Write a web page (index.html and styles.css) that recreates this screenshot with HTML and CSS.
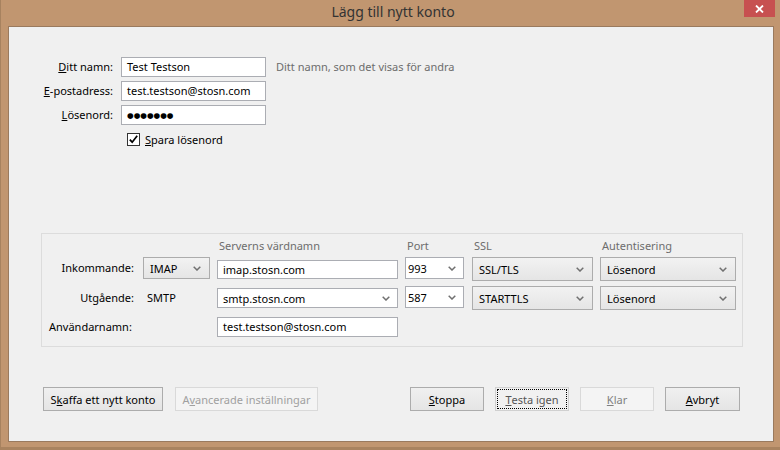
FILE: index.html
```html
<!DOCTYPE html>
<html lang="sv">
<head>
<meta charset="utf-8">
<title>Lägg till nytt konto</title>
<link rel="stylesheet" href="styles.css">
</head>
<body>
<div class="window">
  <div class="titlebar">
    <span></span>
    <div class="title">Lägg till nytt konto</div>
    <div class="close-wrap">
      <div class="close"><svg width="9" height="8" viewBox="0 0 9 8"><path d="M1 0.5 L8 7.5 M8 0.5 L1 7.5" stroke="#fff" stroke-width="1.8" fill="none"/></svg></div>
    </div>
  </div>
  <div class="content">
    <div class="form">
      <div class="lbl"><u>D</u>itt namn:</div>
      <div class="input">Test Testson</div>
      <div class="hint">Ditt namn, som det visas för andra</div>

      <div class="lbl"><u>E</u>-postadress:</div>
      <div class="input">test.testson@stosn.com</div>
      <div></div>

      <div class="lbl"><u>L</u>ösenord:</div>
      <div class="input"><span class="dots">●●●●●●●</span></div>
      <div></div>

      <div></div>
      <div class="check-row">
        <span class="checkbox"><svg width="11" height="11" viewBox="0 0 11 11"><path d="M1.8 5.6 L4.2 8.2 L9.2 1.8" stroke="#000" stroke-width="1.7" fill="none"/></svg></span>
        <span><u>S</u>para lösenord</span>
      </div>
    </div>

    <div class="group">
      <div class="sgrid">
        <div></div>
        <div></div>
        <div class="head">Serverns värdnamn</div>
        <div class="head">Port</div>
        <div class="head">SSL</div>
        <div class="head">Autentisering</div>

        <div class="rlbl">Inkommande:</div>
        <div class="select h22">IMAP<svg class="chev" width="8" height="5" viewBox="0 0 8 5"><path d="M0.7 0.7 L4 4 L7.3 0.7" stroke="#707070" stroke-width="1.5" fill="none"/></svg></div>
        <div class="input host1">imap.stosn.com</div>
        <div class="combo port">993<svg class="chev" width="8" height="5" viewBox="0 0 8 5"><path d="M0.7 0.7 L4 4 L7.3 0.7" stroke="#707070" stroke-width="1.5" fill="none"/></svg></div>
        <div class="select h24">SSL/TLS<svg class="chev" width="8" height="5" viewBox="0 0 8 5"><path d="M0.7 0.7 L4 4 L7.3 0.7" stroke="#707070" stroke-width="1.5" fill="none"/></svg></div>
        <div class="select h24">Lösenord<svg class="chev" width="8" height="5" viewBox="0 0 8 5"><path d="M0.7 0.7 L4 4 L7.3 0.7" stroke="#707070" stroke-width="1.5" fill="none"/></svg></div>

        <div class="rlbl r2">Utgående:</div>
        <div class="plain">SMTP</div>
        <div class="combo host2">smtp.stosn.com<svg class="chev" width="8" height="5" viewBox="0 0 8 5"><path d="M0.7 0.7 L4 4 L7.3 0.7" stroke="#707070" stroke-width="1.5" fill="none"/></svg></div>
        <div class="combo port">587<svg class="chev" width="8" height="5" viewBox="0 0 8 5"><path d="M0.7 0.7 L4 4 L7.3 0.7" stroke="#707070" stroke-width="1.5" fill="none"/></svg></div>
        <div class="select h24">STARTTLS<svg class="chev" width="8" height="5" viewBox="0 0 8 5"><path d="M0.7 0.7 L4 4 L7.3 0.7" stroke="#707070" stroke-width="1.5" fill="none"/></svg></div>
        <div class="select h24">Lösenord<svg class="chev" width="8" height="5" viewBox="0 0 8 5"><path d="M0.7 0.7 L4 4 L7.3 0.7" stroke="#707070" stroke-width="1.5" fill="none"/></svg></div>

        <div class="ulbl">Användarnamn:</div>
        <div class="input">test.testson@stosn.com</div>
      </div>
    </div>

    <div class="buttons">
      <div class="bgroup">
        <div class="btn w120">S<u>k</u>affa ett nytt konto</div>
        <div class="btn w143 disabled">A<u>v</u>ancerade inställningar</div>
      </div>
      <div class="bgroup bgroup-right">
        <div class="btn w74"><u>S</u>toppa</div>
        <div class="btn w74 focus"><u>T</u>esta igen</div>
        <div class="btn w74 disabled klar"><u>K</u>lar</div>
        <div class="btn w75"><u>A</u>vbryt</div>
      </div>
    </div>
  </div>
</div>
</body>
</html>
```
FILE: styles.css
```css
* { box-sizing: border-box; }
html, body { margin: 0; padding: 0; }
body {
  width: 780px;
  height: 450px;
  overflow: hidden;
  background: #c19670;
  font-family: "Noto Sans", "Open Sans", sans-serif;
  font-size: 11px;
  color: #000;
}
.window {
  width: 780px;
  height: 450px;
  border-left: 1px solid #a7825f;
  border-bottom: 3px solid #a9835f;
  display: flex;
  flex-direction: column;
}
.titlebar {
  height: 26px;
  display: grid;
  grid-template-columns: 1fr auto 1fr;
  align-items: start;
}
.title {
  font-size: 14px;
  line-height: 24px;
  color: #333;
  padding-left: 5px;
}
.close-wrap {
  display: flex;
  justify-content: flex-end;
  padding-right: 5px;
}
.close {
  width: 31px;
  height: 17px;
  background: #c75050;
  display: flex;
  align-items: center;
  justify-content: center;
}
.content {
  margin-left: 7px;
  width: 766px;
  height: 416px;
  border: 1px solid #9a7a5e;
  background: #f0f0f0;
  display: flex;
  flex-direction: column;
}
.form {
  display: grid;
  grid-template-columns: 104px 145px auto;
  grid-auto-rows: 20px;
  column-gap: 8px;
  row-gap: 4px;
  padding-top: 30px;
}
.lbl {
  text-align: right;
  line-height: 20px;
  white-space: nowrap;
}
.input {
  height: 20px;
  border: 1px solid #abadb3;
  background: #fff;
  padding: 0 5px;
  line-height: 18px;
  white-space: nowrap;
  overflow: hidden;
}
.dots {
  font-family: "DejaVu Sans", sans-serif;
  font-size: 7.6px;
  letter-spacing: 0;
  position: relative;
  top: -1px;
}
.hint {
  color: #6d6d6d;
  line-height: 20px;
  margin-left: 2px;
  white-space: nowrap;
}
.check-row {
  grid-column: 2 / span 2;
  display: flex;
  align-items: center;
  gap: 5px;
  padding-left: 6px;
  height: 21px;
}
.checkbox {
  width: 13px;
  height: 13px;
  border: 1px solid #333;
  background: #fff;
  display: flex;
  align-items: center;
  justify-content: center;
}
.group {
  margin: 84px 0 0 32px;
  width: 702px;
  height: 114px;
  border: 1px solid #dcdcdc;
  padding: 4px 0 9px 0;
}
.sgrid {
  display: grid;
  grid-template-columns: 94px 67px 181px 60px 121px 136px;
  grid-template-rows: 19px 29px 31px 20px;
  column-gap: 7px;
  align-items: start;
}
.head {
  color: #6d6d6d;
  line-height: 16px;
  white-space: nowrap;
  padding-left: 2px;
}
.rlbl {
  text-align: right;
  padding-right: 2px;
  line-height: 22px;
  white-space: nowrap;
}
.rlbl.r2 { line-height: 24px; }
.plain {
  line-height: 24px;
  padding-left: 4px;
}
.ulbl {
  grid-column: 1 / span 2;
  padding-left: 7px;
  line-height: 20px;
}
.select {
  display: flex;
  align-items: center;
  justify-content: space-between;
  border: 1px solid #acacac;
  background: linear-gradient(#f2f2f2, #e5e5e5);
  padding: 0 8px 0 6px;
  white-space: nowrap;
}
.h22 { height: 22px; }
.h24 { height: 24px; }
.combo {
  display: flex;
  align-items: center;
  justify-content: space-between;
  border: 1px solid #abadb3;
  background: #fff;
  padding: 0 7px 0 5px;
  white-space: nowrap;
}
.port {
  width: 59px;
  height: 22px;
  padding-left: 2px;
}
.host1 {
  margin-top: 3px;
  height: 19px;
  line-height: 17px;
}
.host2 {
  margin-top: 2px;
  height: 20px;
}
.chev { flex: none; }
.buttons {
  margin-top: auto;
  display: flex;
  justify-content: space-between;
  padding: 0 33px 30px 34px;
}
.bgroup {
  display: flex;
  gap: 12px;
}
.bgroup-right { gap: 11px; }
.btn {
  height: 24px;
  border: 1px solid #acacac;
  background: linear-gradient(#f0f0f0, #e5e5e5);
  display: flex;
  align-items: center;
  justify-content: center;
  white-space: nowrap;
}
.w120 { width: 120px; }
.w143 { width: 143px; }
.w74 { width: 74px; }
.w75 { width: 75px; }
.btn.disabled {
  border-color: #d9d9d9;
  background: #f4f4f4;
  color: #a0a0a0;
}
.btn.klar { color: #808080; }
.btn.focus {
  border-color: #d0d0d0;
  background: #f1f1f1;
  color: #555;
  outline: 1px dotted #000;
  outline-offset: -3px;
}
```
